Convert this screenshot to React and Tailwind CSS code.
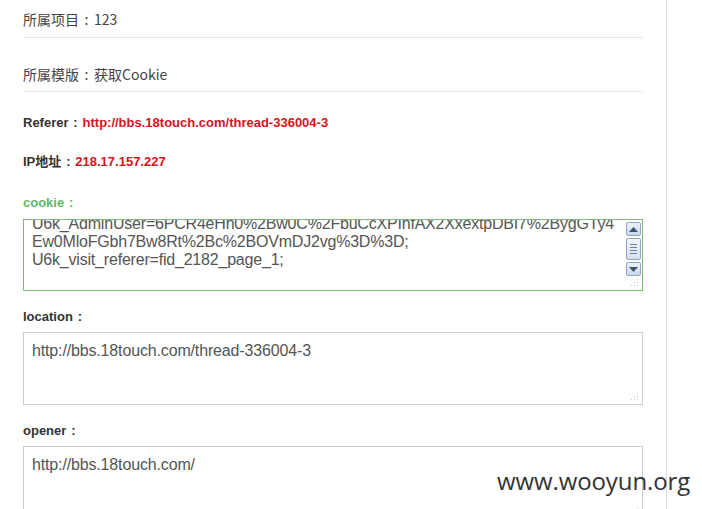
import React from "react";

const cookieLines = [
  "U6k_AdminUser=6PCR4eHn0%2Bw0C%2FbuCcXPInfAX2XxextpDBI7%2BygGTy4",
  "Ew0MloFGbh7Bw8Rt%2Bc%2BOVmDJ2vg%3D%3D;",
  "U6k_visit_referer=fid_2182_page_1;",
];

const Colon = ({ w = "w-[14px]" }) => (
  <span className={`inline-block ${w} text-center`}>:</span>
);

const Grip = () => (
  <svg width="9" height="9" viewBox="0 0 9 9" className="absolute right-[3px] bottom-[3px]">
    <g fill="#c8c8c8">
      <rect x="7" y="1" width="1" height="1" />
      <rect x="4" y="4" width="1" height="1" />
      <rect x="7" y="4" width="1" height="1" />
      <rect x="1" y="7" width="1" height="1" />
      <rect x="4" y="7" width="1" height="1" />
      <rect x="7" y="7" width="1" height="1" />
    </g>
  </svg>
);

const ScrollBtn = ({ up }) => (
  <div className="w-[15px] h-[14px] rounded-[2px] border border-[#8fa5c6] bg-gradient-to-b from-[#eef3fb] to-[#c9d7ec] flex items-center justify-center">
    <svg width="9" height="5" viewBox="0 0 9 5">
      <path d={up ? "M0 5 L4.5 0 L9 5 Z" : "M0 0 L9 0 L4.5 5 Z"} fill="#3d5170" />
    </svg>
  </div>
);

const Scrollbar = () => (
  <div className="absolute right-0 top-0 bottom-0 w-[17px] bg-white flex flex-col items-center pt-[2px] gap-[2px]">
    <ScrollBtn up />
    <div className="w-[15px] h-[22px] rounded-[2px] border border-[#8fa5c6] bg-gradient-to-b from-[#f2f6fc] to-[#d5e0f0] flex items-center justify-center">
      <div className="flex flex-col gap-[2px]">
        <div className="w-[7px] h-px bg-[#6b7f9e]" />
        <div className="w-[7px] h-px bg-[#6b7f9e]" />
        <div className="w-[7px] h-px bg-[#6b7f9e]" />
        <div className="w-[7px] h-px bg-[#6b7f9e]" />
      </div>
    </div>
    <ScrollBtn />
  </div>
);

const Label = ({ children, green }) => (
  <div
    className={`text-[13px] leading-[18px] font-bold ${green ? "text-[#66b866]" : "text-[#333]"}`}
  >
    {children}
    <Colon />
  </div>
);

const Box = ({ children, h, green }) => (
  <div
    className={`relative border ${green ? "border-[#7dbb7d]" : "border-[#cccccc]"} overflow-hidden bg-white ${h}`}
  >
    {children}
    <Grip />
  </div>
);

export default function App() {
  return (
    <div className="w-[702px] h-[509px] bg-white overflow-hidden relative flex font-['Liberation_Sans','Noto_Sans_CJK_SC',sans-serif]">
      <div className="w-[666px] shrink-0 pl-[23px] pr-[23px] flex flex-col">
        <div className="pt-[10px] pb-[9px] border-b border-[#e6e6e6] text-[14px] leading-[18px] text-[#444] font-['Noto_Sans_CJK_SC',sans-serif]">
          所属项目<Colon w="w-[15px]" />123
        </div>
        <div className="pt-[27px] pb-[8px] border-b border-[#e6e6e6] text-[14px] leading-[18px] text-[#444] font-['Noto_Sans_CJK_SC',sans-serif]">
          所属模版<Colon w="w-[15px]" />获取Cookie
        </div>

        <div className="mt-[22px] text-[13px] leading-[18px] font-bold text-[#333]">
          Referer<Colon />
          <span className="text-[#d8121c]">http://bbs.18touch.com/thread-336004-3</span>
        </div>
        <div className="mt-[21px] text-[13px] leading-[18px] font-bold text-[#333]">
          IP地址<Colon />
          <span className="text-[#d8121c]">218.17.157.227</span>
        </div>

        <div className="mt-[23px]">
          <Label green>cookie</Label>
        </div>
        <div className="mt-[7px]">
          <Box h="h-[72px]" green>
            <div className="pl-[8px] pr-[20px] -mt-[5px] text-[16px] leading-[18px] tracking-[-0.2px] text-[#555] whitespace-nowrap">
              {cookieLines.map((l) => (
                <div key={l}>{l}</div>
              ))}
            </div>
            <Scrollbar />
          </Box>
        </div>

        <div className="mt-[17px]">
          <Label>location</Label>
        </div>
        <div className="mt-[6px]">
          <Box h="h-[73px]">
            <div className="pl-[8px] pt-[9px] text-[16px] leading-[18px] tracking-[-0.15px] text-[#555]">
              http://bbs.18touch.com/thread-336004-3
            </div>
          </Box>
        </div>

        <div className="mt-[17px]">
          <Label>opener</Label>
        </div>
        <div className="mt-[6px]">
          <Box h="h-[73px]">
            <div className="pl-[8px] pt-[9px] text-[16px] leading-[18px] tracking-[-0.15px] text-[#555]">
              http://bbs.18touch.com/
            </div>
          </Box>
        </div>
      </div>
      <div className="w-px h-full bg-[#dddddd]" />

      <div className="absolute left-[497px] top-[466px] text-[24px] leading-[30px] text-[#333] font-['Open_Sans',sans-serif] tracking-[-0.1px]">
        www.wooyun.org
      </div>
    </div>
  );
}
